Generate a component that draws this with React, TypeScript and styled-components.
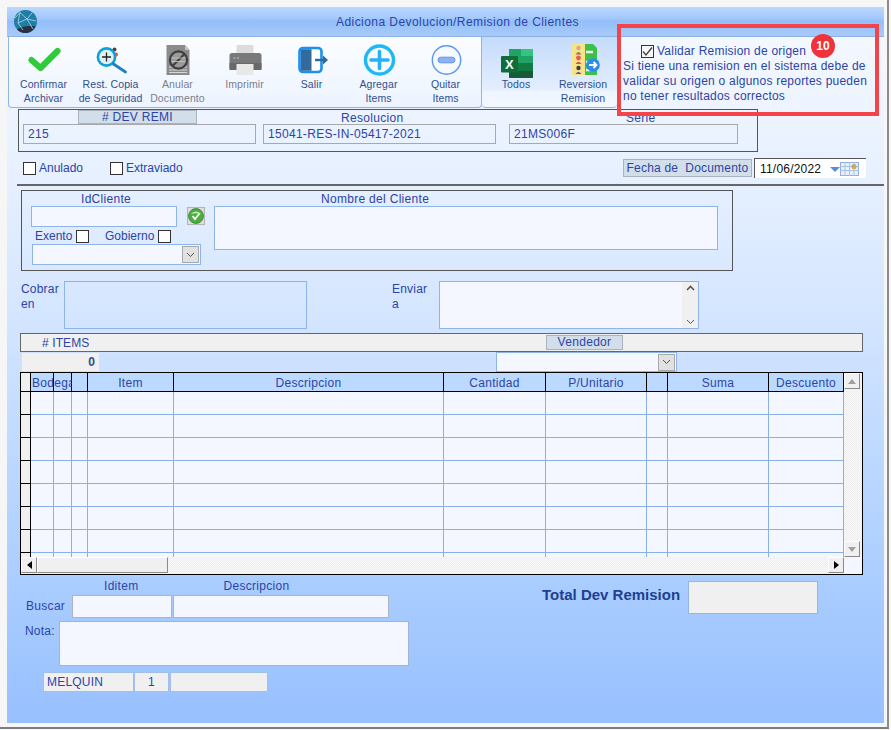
import React from 'react';
import styled, { createGlobalStyle } from 'styled-components';

const GlobalStyle = createGlobalStyle`
  html, body {
    margin: 0;
    padding: 0;
    background: #f6f6f6;
  }
  * {
    box-sizing: border-box;
  }
`;

const INK = '#2c44a6';
const FIELD_LINE = '#8fb4ea';
const GRID_LINE = '#8ab0e8';
const FIELD_BG = '#f4f7ff';
const COLUMNS = '10px 23px 18px 16px 86px 270px 102px 101px 21px 101px 75px';

const Screen = styled.div`
  width: 889px;
  height: 729px;
  padding: 7px 4px 4px 7px;
  border-right: 2px solid #8c8c8c;
  border-bottom: 2px solid #7d7d7d;
  font-family: 'Liberation Sans', Arial, sans-serif;
  font-size: 12px;
  color: ${INK};
`;

const Form = styled.div`
  position: relative;
  width: 877px;
  height: 716px;
  background: linear-gradient(180deg, #f7faff 0%, #e6f0ff 24%, #d2e4ff 45%, #a8ccff 82%, #98c0fe 100%);
`;

const TitleBar = styled.div`
  display: flex;
  align-items: center;
  height: 30px;
  padding: 0 6px 0 7px;
  background: linear-gradient(180deg, #bad7ff 0%, #a6cbfd 35%, #94bff9 50%, #a8cafa 100%);
  border-bottom: 1px solid #8ab0e6;
  font-size: 12px;
  letter-spacing: 0.44px;
`;

const TitleText = styled.div`
  flex: 1;
  text-align: center;
`;

const ToolbarRow = styled.div`
  display: flex;
  height: 71px;
  padding-left: 1px;
`;

const ToolGroup = styled.div<{ $tinted?: boolean }>`
  display: flex;
  width: ${p => (p.$tinted ? '135px' : '474px')};
  height: 71px;
  padding: 0 ${p => (p.$tinted ? '0' : '1px')};
  border: 1px solid #8fb4ea;
  border-top: none;
  border-right: ${p => (p.$tinted ? 'none' : '1px solid #8fb4ea')};
  border-left: ${p => (p.$tinted ? 'none' : '1px solid #8fb4ea')};
  border-radius: 0 0 4px 4px;
  background: ${p =>
    p.$tinted
      ? 'linear-gradient(180deg, #c4dbfb 0%, #e4effe 76%, #eef5ff 77%, #f3f8ff 100%)'
      : 'linear-gradient(180deg, #fbfdff 0%, #edf4ff 100%)'};
`;

const ToolButton = styled.div<{ $muted?: boolean; $wide?: number }>`
  display: flex;
  flex-direction: column;
  align-items: center;
  width: ${p => p.$wide ?? 67}px;
  padding-top: 6px;
  color: ${p => (p.$muted ? '#7a7f8c' : '#2e4f8f')};
  font-size: 10.5px;
  line-height: 14px;
  letter-spacing: 0.1px;
  text-align: center;
  white-space: nowrap;
`;

const ToolIcon = styled.svg`
  display: block;
  width: 34px;
  height: 34px;
  overflow: visible;
`;

const ValidatePanel = styled.div`
  width: 262px;
  padding: 7px 0 0 6px;
  font-size: 12px;
  line-height: 15px;
  letter-spacing: 0.23px;
`;

const ValidateCheck = styled.div`
  display: flex;
  align-items: center;
  gap: 3px;
  margin-left: 18px;
`;

const CheckBox = styled.span<{ $checked?: boolean }>`
  display: inline-flex;
  flex: none;
  align-items: center;
  justify-content: center;
  width: 13px;
  height: 13px;
  border: 1px solid #333;
  background: ${p => (p.$checked ? '#f7f7f7' : '#fff')};
`;

const Callout = styled.div`
  position: absolute;
  top: 17px;
  left: 610px;
  width: 262px;
  height: 92px;
  border: 4px solid #f4444a;
  pointer-events: none;
`;

const CountBadge = styled.div`
  position: absolute;
  top: 27px;
  left: 804px;
  width: 24px;
  height: 24px;
  border-radius: 50%;
  background: #f0323a;
  color: #fff;
  font-size: 12px;
  font-weight: 700;
  line-height: 24px;
  text-align: center;
`;

const DocFrame = styled.div`
  display: grid;
  grid-template-columns: 233px 233px 235px;
  grid-template-rows: 14px 20px;
  column-gap: 7px;
  justify-content: start;
  width: 740px;
  height: 43px;
  margin: 1px 0 0 11px;
  padding: 0 0 0 4px;
  border: 1px solid #555;
`;

const DocHead = styled.div<{ $left: number }>`
  padding-left: ${p => p.$left}px;
  line-height: 16px;
  letter-spacing: 0.3px;
  white-space: nowrap;
`;

const HeadTab = styled.div<{ $width: number; $left?: number; $height?: number }>`
  flex: none;
  width: ${p => p.$width}px;
  height: ${p => p.$height ?? 14}px;
  margin-left: ${p => p.$left ?? 0}px;
  border: 1px solid #aab2bd;
  background: #d3deeb;
  line-height: ${p => (p.$height ?? 14) - 2}px;
  letter-spacing: 0.3px;
  text-align: center;
`;

const DocValue = styled.div<{ $nudge?: number }>`
  height: 20px;
  margin-left: ${p => p.$nudge ?? 0}px;
  padding-left: 4px;
  border: 1px solid #a9a9a9;
  line-height: 18px;
  letter-spacing: 0.3px;
`;

const StatusRow = styled.div`
  display: flex;
  align-items: center;
  height: 20px;
  margin-top: 6px;
  padding-left: 16px;
`;

const CheckLabel = styled.label<{ $width?: number }>`
  display: flex;
  align-items: center;
  gap: 3px;
  width: ${p => (p.$width ? `${p.$width}px` : 'auto')};
`;

const DateLabel = styled.div`
  width: 129px;
  height: 18px;
  margin-left: 426px;
  border: 1px solid #a9b2bd;
  background: #d3deeb;
  line-height: 16px;
  letter-spacing: 0.2px;
  text-align: center;
`;

const DateField = styled.div`
  display: flex;
  align-items: center;
  width: 112px;
  height: 20px;
  margin-left: 2px;
  padding-left: 5px;
  border-top: 1px solid #555;
  border-left: 1px solid #555;
  background: #fff;
  color: #111;
  letter-spacing: 0.2px;
`;

const DateCaret = styled.span`
  width: 0;
  height: 0;
  margin: 2px 0 0 9px;
  border-top: 5px solid #5a8fd8;
  border-right: 5px solid transparent;
  border-left: 5px solid transparent;
`;

const Divider = styled.div`
  height: 2px;
  margin: 6px 0 0 10px;
  background: #666;
`;

const ClientFrame = styled.div`
  display: flex;
  width: 712px;
  height: 81px;
  margin: 4px 0 0 14px;
  padding-left: 9px;
  border: 1px solid #555;
`;

const ClientLeft = styled.div`
  width: 183px;
`;

const ClientRight = styled.div`
  width: 504px;
`;

const FieldLabel = styled.div<{ $left: number }>`
  height: 15px;
  padding-left: ${p => p.$left}px;
  line-height: 16px;
  letter-spacing: 0.3px;
`;

const Field = styled.div<{ $width: number; $height: number; $muted?: boolean; $clear?: boolean; $line?: string; $left?: number }>`
  flex: none;
  width: ${p => p.$width}px;
  height: ${p => p.$height}px;
  margin-left: ${p => p.$left ?? 0}px;
  border: 1px solid ${p => p.$line ?? FIELD_LINE};
  background: ${p => (p.$clear ? 'transparent' : p.$muted ? '#f0f0f0' : FIELD_BG)};
`;

const IdRow = styled.div`
  display: flex;
  align-items: flex-start;
`;

const CheckButton = styled.div`
  display: flex;
  align-items: center;
  justify-content: center;
  width: 18px;
  height: 18px;
  margin: 1px 0 0 10px;
  border: 1px solid #b4b4b4;
  background: #dedede;
`;

const FlagRow = styled.div`
  display: flex;
  align-items: center;
  height: 16px;
  margin-top: 1px;
  padding-left: 4px;
`;

const FlagLabel = styled.label<{ $width: number }>`
  display: flex;
  align-items: center;
  gap: 4px;
  width: ${p => p.$width}px;
`;

const ComboBox = styled.div<{ $width: number; $left?: number; $height?: number }>`
  display: flex;
  align-items: center;
  justify-content: flex-end;
  width: ${p => p.$width}px;
  height: ${p => p.$height ?? 21}px;
  margin-left: ${p => p.$left ?? 0}px;
  padding-right: 1px;
  border: 1px solid ${FIELD_LINE};
  background: ${FIELD_BG};
`;

const ComboArrow = styled.span`
  display: flex;
  align-items: center;
  justify-content: center;
  width: 17px;
  height: 17px;
  border: 1px solid #a9a9a9;
  background: #e1e1e1;
`;

const AddressRow = styled.div`
  display: flex;
  height: 48px;
  margin: 10px 0 0 14px;
`;

const AddressLabel = styled.div<{ $width: number; $left?: number }>`
  flex: none;
  width: ${p => p.$width}px;
  margin-left: ${p => p.$left ?? 0}px;
  padding-top: 1px;
  line-height: 15px;
  letter-spacing: 0.2px;
`;

const NotesBox = styled(Field)`
  display: flex;
  justify-content: flex-end;
`;

const NotesScroll = styled.div`
  display: flex;
  flex-direction: column;
  justify-content: space-between;
  align-items: center;
  width: 16px;
  padding: 3px 0;
  background: #f0f0f0;
`;

const ItemsBar = styled.div`
  display: flex;
  align-items: center;
  width: 843px;
  height: 19px;
  margin: 4px 0 0 13px;
  padding-left: 21px;
  border: 1px solid #666;
  background: #f0f0f0;
  letter-spacing: 0.1px;
`;

const ItemsTitle = styled.span`
  width: 504px;
`;

const CountRow = styled.div`
  display: flex;
  height: 20px;
  margin-left: 14px;
`;

const CountBox = styled.div`
  width: 79px;
  height: 20px;
  padding-right: 4px;
  background: #f0f0f0;
  border: 1px solid #cfe0f8;
  color: #2d4a8f;
  font-weight: 700;
  line-height: 18px;
  text-align: right;
`;

const DataGrid = styled.div`
  display: grid;
  grid-template-columns: 823px 18px;
  grid-template-rows: 184px 17px;
  width: 843px;
  height: 203px;
  margin-left: 13px;
  border: 1px solid #000;
  background: ${FIELD_BG};
`;

const GridBody = styled.div`
  overflow: hidden;
`;

const GridRow = styled.div<{ $height: number }>`
  display: grid;
  grid-template-columns: ${COLUMNS};
  height: ${p => p.$height}px;
`;

const HeadCell = styled.div<{ $grey?: boolean }>`
  position: relative;
  height: 19px;
  border-right: 1px solid #000;
  border-bottom: 1px solid #000;
  background: ${p => (p.$grey ? '#f0f0f0' : '#bcdaff')};
  line-height: 20px;
  letter-spacing: 0.3px;
  text-align: center;
  white-space: nowrap;
`;

const ClippedHead = styled.span`
  position: absolute;
  z-index: 1;
  top: 0;
  left: 1px;
  overflow: hidden;
  width: 40px;
  text-align: left;
`;

const BodyCell = styled.div<{ $open?: boolean }>`
  border-right: 1px solid ${GRID_LINE};
  border-bottom: ${p => (p.$open ? 'none' : `1px solid ${GRID_LINE}`)};
`;

const SelectorCell = styled.div<{ $open?: boolean }>`
  border-right: 1px solid #000;
  border-bottom: ${p => (p.$open ? 'none' : '1px solid #000')};
  background: #f0f0f0;
`;

const ScrollTrack = styled.div<{ $vertical?: boolean }>`
  display: flex;
  flex-direction: ${p => (p.$vertical ? 'column' : 'row')};
  justify-content: space-between;
  background-color: #fff;
  background-image: repeating-conic-gradient(#ececec 0% 25%, #fbfbfb 0% 50%);
  background-size: 2px 2px;
`;

const ScrollButton = styled.div<{ $width?: number }>`
  display: flex;
  flex: none;
  align-items: center;
  justify-content: center;
  width: ${p => p.$width ?? 16}px;
  height: 16px;
  border-top: 1px solid #fff;
  border-left: 1px solid #fff;
  border-right: 1px solid #8a8a8a;
  border-bottom: 1px solid #8a8a8a;
  background: #f0f0f0;
`;

const TrackGroup = styled.div`
  display: flex;
`;

const Arrow = styled.span<{ $dir: 'up' | 'down' | 'left' | 'right'; $color?: string }>`
  width: 0;
  height: 0;
  border: 4px solid transparent;
  ${p => {
    const color = p.$color ?? '#000';
    if (p.$dir === 'up') return `border-bottom: 5px solid ${color}; border-top: none;`;
    if (p.$dir === 'down') return `border-top: 5px solid ${color}; border-bottom: none;`;
    if (p.$dir === 'left') return `border-right: 5px solid ${color}; border-left: none;`;
    return `border-left: 5px solid ${color}; border-right: none;`;
  }}
`;

const Footer = styled.div`
  display: flex;
  margin-top: 3px;
`;

const FooterLeft = styled.div`
  width: 535px;
`;

const SearchHeads = styled.div`
  display: flex;
  height: 17px;
  line-height: 16px;
  letter-spacing: 0.3px;
`;

const SearchHead = styled.div<{ $left: number }>`
  margin-left: ${p => p.$left}px;
`;

const SearchRow = styled.div`
  display: flex;
  align-items: center;
  gap: 1px;
  padding-left: 19px;
`;

const SearchLabel = styled.span`
  width: 45px;
  padding-bottom: 2px;
  letter-spacing: 0.3px;
`;

const NoteRow = styled.div`
  display: flex;
  margin: 3px 0 0 18px;
`;

const NoteLabel = styled.span`
  width: 34px;
  padding-top: 3px;
  letter-spacing: 0.2px;
`;

const UserRow = styled.div`
  display: flex;
  margin: 6px 0 0 36px;
`;

const UserCell = styled.div<{ $width: number; $center?: boolean; $gap?: number }>`
  width: ${p => p.$width}px;
  height: 20px;
  margin-right: ${p => p.$gap ?? 0}px;
  padding-left: ${p => (p.$center ? 0 : 3)}px;
  border: 1px solid #a3bfe8;
  background: #f0f0f0;
  line-height: 18px;
  letter-spacing: 0.2px;
  text-align: ${p => (p.$center ? 'center' : 'left')};
`;

const TotalBlock = styled.div`
  display: flex;
  align-items: flex-start;
  padding-top: 3px;
`;

const TotalLabel = styled.div`
  width: 146px;
  padding-top: 5px;
  color: #1f3f8f;
  font-size: 15px;
  font-weight: 700;
  line-height: 17px;
  white-space: nowrap;
`;

const GlobeLogo = () => (
  <svg width="23" height="23" viewBox="0 0 23 23">
    <circle cx="11.5" cy="11.5" r="11.5" fill="#1b7fa6" />
    <path d="M3 19.5 C8 16 15 15.5 21.5 16.5 C19.5 20.5 15.5 23 11.5 23 C8 23 5 21.5 3 19.5Z" fill="#2b3040" />
    <path d="M6 2.5 L4 13 L13 9 L18 3 M6 2.5 L13 9 L19 19 M4 13 L9 20 M13 9 L22 11 M1 8 L6 2.5" stroke="#bcd6e6" strokeWidth="0.8" fill="none" />
  </svg>
);

const ConfirmIcon = () => (
  <ToolIcon viewBox="0 0 34 34">
    <path d="M4.5 17 L13.5 25 L30.5 8" fill="none" stroke="#2fcb3b" strokeWidth="6.2" strokeLinecap="round" strokeLinejoin="round" />
  </ToolIcon>
);

const RestoreIcon = () => (
  <ToolIcon viewBox="0 0 34 34">
    <circle cx="20.5" cy="6.5" r="2" fill="#444" />
    <circle cx="22" cy="11.5" r="2" fill="#e8504a" />
    <circle cx="12.5" cy="14" r="8.6" fill="#dff1f7" stroke="#0d9fd6" strokeWidth="2.6" />
    <path d="M12.5 9.5 V18.5 M8 14 H17" stroke="#222" strokeWidth="1.3" />
    <path d="M19.5 21 L31.5 29" stroke="#1c7fc4" strokeWidth="2.8" strokeLinecap="round" />
  </ToolIcon>
);

const VoidIcon = () => (
  <ToolIcon viewBox="0 0 34 34">
    <path d="M5.5 2 H24 L28.5 7 V32 H5.5 Z" fill="#8b8b8b" />
    <path d="M24 2 L28.5 7 H24 Z" fill="#c4c4c4" />
    <path d="M8 24 H26 M8 27 H26 M8 29.5 H26" stroke="#d8d8d8" strokeWidth="1" />
    <circle cx="17.5" cy="17" r="8.6" fill="#9a9a9a" stroke="#3f3f3f" strokeWidth="2.2" />
    <path d="M11.5 23 L23.5 11" stroke="#3f3f3f" strokeWidth="2.2" />
    <path d="M10.5 15 H24.5 M10.5 18.5 H24.5" stroke="#c9c9c9" strokeWidth="0.8" />
  </ToolIcon>
);

const PrintIcon = () => (
  <ToolIcon viewBox="0 0 34 34">
    <rect x="8.5" y="2" width="17" height="11" rx="1" fill="#dcdcdc" />
    <rect x="1.5" y="10" width="32" height="17" rx="2.5" fill="#797979" />
    <rect x="1.5" y="20" width="32" height="7" fill="#686868" />
    <circle cx="6.5" cy="15" r="1.1" fill="#a8a8a8" />
    <circle cx="10" cy="15" r="1.1" fill="#a8a8a8" />
    <rect x="8.5" y="21" width="17" height="11" fill="#e8e8e8" />
  </ToolIcon>
);

const ExitIcon = () => (
  <ToolIcon viewBox="0 0 34 34">
    <rect x="4.5" y="5" width="22" height="24" rx="3.5" fill="#fff" stroke="#1a90f0" strokeWidth="2.6" />
    <path d="M5.8 7.5 Q5.8 6.3 7 6.3 L16.5 6.3 V27.7 H7 Q5.8 27.7 5.8 26.5 Z" fill="#336a9e" />
    <path d="M20 17 H30.5" stroke="#33689c" strokeWidth="2.4" />
    <path d="M28 12.5 L33 17 L28 21.5 Z" fill="#33689c" />
  </ToolIcon>
);

const AddIcon = () => (
  <ToolIcon viewBox="0 0 34 34">
    <circle cx="17.5" cy="17" r="14" fill="#f8fcff" stroke="#1db8f6" strokeWidth="3.4" />
    <path d="M17.5 8.5 V25.5 M9 17 H26" stroke="#26b2f4" strokeWidth="3.6" strokeLinecap="round" />
  </ToolIcon>
);

const RemoveIcon = () => (
  <ToolIcon viewBox="0 0 34 34">
    <circle cx="17.5" cy="17" r="14.2" fill="#f7faff" stroke="#5b97f2" strokeWidth="1.4" />
    <rect x="9" y="14.2" width="17" height="5.6" rx="2.8" fill="#8fb2ee" stroke="#5b97f2" strokeWidth="1" />
  </ToolIcon>
);

const ExcelIcon = () => (
  <ToolIcon viewBox="0 0 34 34">
    <rect x="10" y="6" width="24" height="29" rx="1" fill="#21a366" />
    <path d="M22 6 H33 Q34 6 34 7 V13 H22 Z" fill="#33c481" />
    <rect x="22" y="20" width="12" height="7.5" fill="#107c41" />
    <path d="M10 27.5 H34 V34 Q34 35 33 35 H11 Q10 35 10 34 Z" fill="#185c37" />
    <rect x="10" y="6" width="12" height="7" fill="#21a366" />
    <rect x="10" y="20" width="12" height="7.5" fill="#107c41" />
    <rect x="2" y="13" width="17" height="16.5" rx="1" fill="#0f6d3c" />
    <text x="10.5" y="26" fill="#fff" fontFamily="'Liberation Sans', Arial, sans-serif" fontSize="13" fontWeight="700" textAnchor="middle">
      X
    </text>
  </ToolIcon>
);

const ReversalIcon = () => (
  <ToolIcon viewBox="0 0 34 34">
    <path d="M19 1 H27 L31 5 V32 H19 Z" fill="#3cc04a" />
    <rect x="6" y="1" width="13" height="31" fill="#f5e48a" />
    <path d="M20 9 H27 M20 19 H25 M20 27 H25" stroke="#eaf8e8" strokeWidth="2.4" />
    <circle cx="12.5" cy="5" r="2.2" fill="#d9a98a" />
    <path d="M9.5 11.5 Q12.5 6.5 15.5 11.5 Z" fill="#a06a5e" />
    <circle cx="12.5" cy="15" r="2.4" fill="#e85b4f" />
    <path d="M9.5 21 Q12.5 16.5 15.5 21 Z" fill="#d8544a" />
    <circle cx="12.5" cy="25" r="2.2" fill="#4a3a3a" />
    <path d="M9.5 31 Q12.5 27 15.5 31 Z" fill="#5a4fa0" />
    <circle cx="27" cy="22" r="6.8" fill="#2b8df0" />
    <path d="M23 22 H30 M27.5 19 L30.5 22 L27.5 25" fill="none" stroke="#fff" strokeWidth="1.8" />
  </ToolIcon>
);

const Tick = () => (
  <svg width="11" height="11" viewBox="0 0 11 11">
    <path d="M1 5.5 L4 9 L10 1.5" fill="none" stroke="#444" strokeWidth="1.4" />
  </svg>
);

const Chevron = ({ up }: { up?: boolean }) => (
  <svg width="9" height="6" viewBox="0 0 9 6">
    <path d={up ? 'M1 5 L4.5 1.5 L8 5' : 'M1 1 L4.5 4.5 L8 1'} fill="none" stroke="#555" strokeWidth={up ? 1.6 : 1} />
  </svg>
);

const CalendarIcon = () => (
  <svg width="19" height="14" viewBox="0 0 19 14">
    <rect x="0.5" y="0.5" width="18" height="13" fill="#e8f0ff" stroke="#8fb0de" />
    <path d="M0 4.5 H19 M0 8.5 H19 M5 0 V14 M9.5 0 V14 M14 0 V14" stroke="#a9c3e8" strokeWidth="1" />
    <circle cx="14" cy="4.5" r="2.6" fill="#c9a860" />
  </svg>
);

const GreenCheck = () => (
  <svg width="16" height="16" viewBox="0 0 16 16">
    <circle cx="8" cy="8" r="7.4" fill="#4cae3f" stroke="#2b7c2c" strokeWidth="0.8" />
    <path d="M2.5 6 Q8 1 13.5 6 Q8 4.5 2.5 6 Z" fill="#c9f0b8" />
    <path d="M4.5 8 L7 11 L11.5 5.5" fill="none" stroke="#fff" strokeWidth="1.8" />
  </svg>
);

const tools = [
  { icon: <ConfirmIcon />, lines: ['Confirmar', 'Archivar'] },
  { icon: <RestoreIcon />, lines: ['Rest. Copia', 'de Seguridad'] },
  { icon: <VoidIcon />, lines: ['Anular', 'Documento'], muted: true },
  { icon: <PrintIcon />, lines: ['Imprimir'], muted: true },
  { icon: <ExitIcon />, lines: ['Salir'] },
  { icon: <AddIcon />, lines: ['Agregar', 'Items'] },
  { icon: <RemoveIcon />, lines: ['Quitar', 'Items'] },
];

const headers = ['', 'Bodega', '', '', 'Item', 'Descripcion', 'Cantidad', 'P/Unitario', '', 'Suma', 'Descuento'];
const rows = [23, 23, 23, 23, 23, 23, 23, 4];

export default function App() {
  return (
    <Screen>
      <GlobalStyle />
      <Form>
        <TitleBar>
          <GlobeLogo />
          <TitleText>Adiciona Devolucion/Remision de Clientes</TitleText>
        </TitleBar>

        <ToolbarRow>
          <ToolGroup>
            {tools.map(tool => (
              <ToolButton key={tool.lines[0]} $muted={tool.muted}>
                {tool.icon}
                {tool.lines.map(line => (
                  <div key={line}>{line}</div>
                ))}
              </ToolButton>
            ))}
          </ToolGroup>
          <ToolGroup $tinted>
            <ToolButton $wide={68}>
              <ExcelIcon />
              <div>Todos</div>
            </ToolButton>
            <ToolButton $wide={66}>
              <ReversalIcon />
              <div>Reversion</div>
              <div>Remision</div>
            </ToolButton>
          </ToolGroup>
          <ValidatePanel>
            <ValidateCheck>
              <CheckBox $checked>
                <Tick />
              </CheckBox>
              Validar Remision de origen
            </ValidateCheck>
            Si tiene una remision en el sistema debe de validar su origen o algunos reportes pueden no tener resultados correctos
          </ValidatePanel>
        </ToolbarRow>

        <DocFrame>
          <DocHead $left={0}>
            <HeadTab $width={119} $left={55}># DEV REMI</HeadTab>
          </DocHead>
          <DocHead $left={78}>Resolucion</DocHead>
          <DocHead $left={123}>Serie</DocHead>
          <DocValue>215</DocValue>
          <DocValue>15041-RES-IN-05417-2021</DocValue>
          <DocValue $nudge={6}>21MS006F</DocValue>
        </DocFrame>

        <StatusRow>
          <CheckLabel $width={87}>
            <CheckBox />
            Anulado
          </CheckLabel>
          <CheckLabel $width={87}>
            <CheckBox />
            Extraviado
          </CheckLabel>
          <DateLabel>Fecha de&nbsp; Documento</DateLabel>
          <DateField>
            11/06/2022
            <DateCaret />
            <CalendarIcon />
          </DateField>
        </StatusRow>

        <Divider />

        <ClientFrame>
          <ClientLeft>
            <FieldLabel $left={50}>IdCliente</FieldLabel>
            <IdRow>
              <Field $width={146} $height={21} />
              <CheckButton>
                <GreenCheck />
              </CheckButton>
            </IdRow>
            <FlagRow>
              <FlagLabel $width={70}>
                Exento
                <CheckBox />
              </FlagLabel>
              <FlagLabel $width={70}>
                Gobierno
                <CheckBox />
              </FlagLabel>
            </FlagRow>
            <ComboBox $width={169} $left={1}>
              <ComboArrow>
                <Chevron />
              </ComboArrow>
            </ComboBox>
          </ClientLeft>
          <ClientRight>
            <FieldLabel $left={107}>Nombre del Cliente</FieldLabel>
            <Field $width={504} $height={44} />
          </ClientRight>
        </ClientFrame>

        <AddressRow>
          <AddressLabel $width={43}>Cobrar en</AddressLabel>
          <Field $width={243} $height={48} $clear />
          <AddressLabel $width={47} $left={85}>
            Enviar
            <br />a
          </AddressLabel>
          <NotesBox $width={260} $height={48}>
            <NotesScroll>
              <Chevron up />
              <Chevron />
            </NotesScroll>
          </NotesBox>
        </AddressRow>

        <ItemsBar>
          <ItemsTitle># ITEMS</ItemsTitle>
          <HeadTab $width={77} $height={15}>
            Vendedor
          </HeadTab>
        </ItemsBar>

        <CountRow>
          <CountBox>0</CountBox>
          <ComboBox $width={181} $left={396} $height={20}>
            <ComboArrow>
              <Chevron />
            </ComboArrow>
          </ComboBox>
        </CountRow>

        <DataGrid>
          <GridBody>
            <GridRow $height={19}>
              {headers.map((title, index) =>
                index === 1 ? (
                  <HeadCell key={index}>
                    <ClippedHead>{title}</ClippedHead>
                  </HeadCell>
                ) : (
                  <HeadCell key={index} $grey={index === 0}>
                    {title}
                  </HeadCell>
                ),
              )}
            </GridRow>
            {rows.map((height, rowIndex) => {
              const open = rowIndex === rows.length - 1;
              return (
                <GridRow key={rowIndex} $height={height}>
                  {headers.map((_, cellIndex) =>
                    cellIndex === 0 ? (
                      <SelectorCell key={cellIndex} $open={open} />
                    ) : (
                      <BodyCell key={cellIndex} $open={open} />
                    ),
                  )}
                </GridRow>
              );
            })}
          </GridBody>
          <ScrollTrack $vertical>
            <ScrollButton>
              <Arrow $dir="up" $color="#a0a0a0" />
            </ScrollButton>
            <ScrollButton>
              <Arrow $dir="down" $color="#a0a0a0" />
            </ScrollButton>
          </ScrollTrack>
          <ScrollTrack>
            <TrackGroup>
              <ScrollButton>
                <Arrow $dir="left" />
              </ScrollButton>
              <ScrollButton $width={131} />
            </TrackGroup>
            <ScrollButton>
              <Arrow $dir="right" />
            </ScrollButton>
          </ScrollTrack>
          <div />
        </DataGrid>

        <Footer>
          <FooterLeft>
            <SearchHeads>
              <SearchHead $left={97}>Iditem</SearchHead>
              <SearchHead $left={85}>Descripcion</SearchHead>
            </SearchHeads>
            <SearchRow>
              <SearchLabel>Buscar</SearchLabel>
              <Field $width={100} $height={23} $line="#aeb4bd" />
              <Field $width={216} $height={23} $line="#aeb4bd" />
            </SearchRow>
            <NoteRow>
              <NoteLabel>Nota:</NoteLabel>
              <Field $width={350} $height={45} $line="#9fb5d8" />
            </NoteRow>
            <UserRow>
              <UserCell $width={91}>MELQUIN</UserCell>
              <UserCell $width={35} $center $gap={1}>
                1
              </UserCell>
              <UserCell $width={98} />
            </UserRow>
          </FooterLeft>
          <TotalBlock>
            <TotalLabel>Total Dev Remision</TotalLabel>
            <Field $width={130} $height={33} $muted $line="#93b5e8" />
          </TotalBlock>
        </Footer>

        <Callout />
        <CountBadge>10</CountBadge>
      </Form>
    </Screen>
  );
}
